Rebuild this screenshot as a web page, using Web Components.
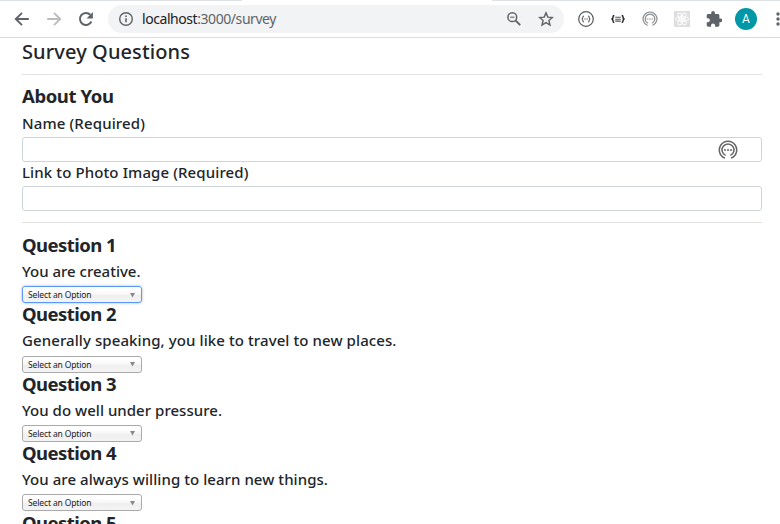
<!DOCTYPE html>
<html lang="en"><head><meta charset="utf-8"><title>Survey</title>
<style>
html,body{margin:0;height:524px;overflow:hidden;background:#fff}
body{font-family:"Noto Sans","Open Sans",sans-serif;color:#212529}
</style></head><body>
<survey-app></survey-app>
<script>
class Base extends HTMLElement{
  paint(html){(this.shadowRoot||this.attachShadow({mode:'open'})).innerHTML=html;}
}
/* A single line of text, tracked so that it spans the width in its "span" attribute. */
customElements.define('text-line',class extends Base{
  connectedCallback(){
    this.paint('<style>:host{display:block;white-space:nowrap}span{display:inline-block}</style><span><slot></slot></span>');
    const s=this.shadowRoot.querySelector('span'),n=this.textContent.length;
    s.style.letterSpacing=((+this.getAttribute('span')-s.getBoundingClientRect().width)/n)+'px';
  }
});
customElements.define('ring-icon',class extends Base{
  connectedCallback(){
    this.paint(`<style>:host{display:block}svg{display:block;width:100%;height:100%}</style>
<svg viewBox="0 0 20 20" fill="none" stroke="currentColor" stroke-width="1.5"><path d="M7 18.1A8.7 8.7 0 1 1 13 18.1"/><path d="M7.6 15.4A6 6 0 1 1 12.4 15.4"/><path d="M6 10h2m1 0h2m1 0h2" stroke-width="1.4"/></svg>`);
  }
});
customElements.define('browser-bar',class extends Base{
  connectedCallback(){
    this.paint(`<style>
:host{display:flex;flex:none;box-sizing:border-box;height:38px;border-bottom:1px solid #d9dbde;align-items:center;color:#5f6368;
background:linear-gradient(#dee1e6,#dee1e6) 0 0/242px 1px no-repeat,linear-gradient(#dee1e6,#dee1e6) 492px 0/288px 1px no-repeat,#fff;padding-left:14px;overflow:hidden}
svg{display:block;flex:none}
.nav{display:flex;gap:16px;margin-right:14px;margin-top:1px}
.box{display:flex;align-items:center;box-sizing:border-box;width:456px;height:28px;border-radius:14px;background:#f1f3f4;padding:0 10px;margin-top:1px;flex:none}
text-line{font:14px/20px "Noto Sans",sans-serif;margin:-1px 0 0 8px;flex:1;color:#5f6368}
b{font-weight:400;color:#202124}
.ext{display:flex;align-items:center;margin:1px 0 0 14px;gap:16px}
ring-icon{width:16px;height:16px;color:#8b8d90}
.av{width:22px;height:22px;border-radius:50%;background:#0097a7;color:#fff;font:12px/22px Roboto,sans-serif;text-align:center;margin-left:-3px;flex:none}
</style>
<div class="nav">
<svg width="16" height="16" viewBox="0 0 16 16" fill="none" stroke="#5f6368" stroke-width="1.9"><path d="M14.8 8H2.5M8 1.8 1.8 8 8 14.2"/></svg>
<svg width="16" height="16" viewBox="0 0 16 16" fill="none" stroke="#babcbe" stroke-width="1.9"><path d="M1.2 8h12.3M8 1.8 14.2 8 8 14.2"/></svg>
<svg width="16" height="16" viewBox="0 0 16 16"><path d="M13.4 10.5A6 6 0 1 1 12.3 3.8" fill="none" stroke="#5f6368" stroke-width="2"/><path d="M14.9 1v6.4H8.5z" fill="#5f6368"/></svg>
</div>
<div class="box">
<svg width="16" height="16" viewBox="0 0 16 16" fill="none" stroke="#5f6368" stroke-width="1.4"><circle cx="8" cy="8" r="6.3"/><path d="M8 7.2v4.1M8 4.4V6" stroke-width="1.6"/></svg>
<text-line span="134"><b>localhost</b>:3000/survey</text-line>
<svg width="16" height="16" viewBox="0 0 16 16" fill="none" stroke="#5f6368" stroke-width="1.5" style="margin-right:16px"><circle cx="6.3" cy="6.2" r="4.4"/><path d="m9.6 9.5 4.6 4.6" stroke-width="1.8"/><path d="M4.2 6.2h4.2" stroke-width="1.1"/></svg>
<svg width="16" height="16" viewBox="0 0 16 16" fill="none" stroke="#5f6368" stroke-width="1.4"><path d="m8 1.9 1.8 4.2 4.6.4-3.5 3 1.1 4.5-4-2.4L4 14l1.1-4.5-3.5-3 4.6-.4z"/></svg>
</div>
<div class="ext">
<svg width="16" height="16" viewBox="0 0 16 16" fill="none" stroke="#55585c"><circle cx="8" cy="8" r="7.3" stroke-width="1.2"/><path d="M6 5c-1.2 0-1.2.5-1.2 1.5S4.5 7.8 3.7 8c.8.2 1.1.5 1.1 1.5S4.8 11 6 11M10 5c1.2 0 1.2.5 1.2 1.5S11.5 7.8 12.3 8c-.8.2-1.1.5-1.1 1.5S11.2 11 10 11" stroke-width="1.1"/><path d="M6.3 8h.9m.4 0h.9m.4 0h.9" stroke-width="1"/></svg>
<svg width="16" height="16" viewBox="0 0 16 16" fill="none" stroke="#222"><path d="M4.3 4.5C3 4.5 3 5 3 6.2S2.5 7.8 1.5 8C2.5 8.2 3 8.6 3 9.8s0 1.7 1.3 1.7M11.7 4.5c1.3 0 1.3.5 1.3 1.7s.5 1.6 1.5 1.8c-1 .2-1.5.6-1.5 1.8s0 1.7-1.3 1.7" stroke-width="1.5"/><path d="M5.2 6.3h5.6M5.2 8.2h5.6M5.2 10.1h5.6" stroke-width="1.1" stroke="#555"/></svg>
<ring-icon></ring-icon>
<svg width="16" height="16" viewBox="0 0 16 16" fill="none" stroke="#fff"><path d="M0 0h16v16H0z" fill="#dedede" stroke="none"/><g stroke-width=".9"><ellipse cx="8" cy="8" rx="6.7" ry="2.5"/><ellipse cx="8" cy="8" rx="6.7" ry="2.5" transform="rotate(60 8 8)"/><ellipse cx="8" cy="8" rx="6.7" ry="2.5" transform="rotate(120 8 8)"/></g><circle cx="8" cy="8" r="1.3" fill="#fff"/></svg>
<svg width="16" height="16" viewBox="1 1 21.5 21.5" fill="#5f6368"><path d="M20.5 11H19V7c0-1.1-.9-2-2-2h-4V3.5a2.5 2.5 0 0 0-5 0V5H4c-1.1 0-2 .9-2 2v3.8h1.5a2.7 2.7 0 0 1 0 5.4H2V20c0 1.1.9 2 2 2h3.8v-1.5a2.7 2.7 0 0 1 5.4 0V22H17c1.1 0 2-.9 2-2v-4h1.5a2.5 2.5 0 0 0 0-5z"/></svg>
<div class="av">A</div>
<svg width="16" height="16" viewBox="0 0 16 16" fill="#5f6368" style="margin-left:-3px"><circle cx="8" cy="3" r="1.7"/><circle cx="8" cy="8" r="1.7"/><circle cx="8" cy="13" r="1.7"/></svg>
</div>`);
  }
});
customElements.define('text-field',class extends Base{
  connectedCallback(){
    this.paint(`<style>:host{display:flex;flex-direction:column}
text-line{font-size:15px;line-height:20px;height:24px;font-weight:500}
.in{box-sizing:border-box;height:25px;border:1px solid #ced4da;border-radius:3px;background:#fff;display:flex;align-items:center;justify-content:flex-end;padding-right:23px}
::slotted(ring-icon){width:20px;height:20px;color:#666}</style>
<text-line span="${this.getAttribute('span')}">${this.getAttribute('label')}</text-line><div class="in"><slot></slot></div>`);
  }
});
customElements.define('option-select',class extends Base{
  connectedCallback(){
    this.paint(`<style>:host{display:flex;box-sizing:border-box;width:120px;height:17px;border:1px solid #aaa;border-radius:3px;background:linear-gradient(#fff 20%,#f6f6f6 50%,#eee 52%,#f4f4f4);align-items:center;justify-content:space-between;padding:0 6px 0 5px;color:#222}
:host([active]){border-color:#5897fb;box-shadow:0 0 3px rgba(0,0,0,.3)}
text-line{font-size:8.5px;line-height:15px}
svg{display:block;margin-top:1px}</style><text-line span="63.5">Select an Option</text-line><svg width="5" height="5" viewBox="0 0 5 5"><path d="M0 0h5L2.5 4.5z" fill="#888"/></svg>`);
  }
});
customElements.define('survey-question',class extends Base{
  connectedCallback(){
    this.paint(`<style>:host{display:flex;flex-direction:column;height:69.4px;flex:none}
.h{font-size:18.5px;font-weight:700;line-height:24px;height:24px}
.p{font-size:15px;font-weight:500;line-height:24px;height:24px;margin:2px 0 3.2px}</style>
<text-line class="h" span="94">Question ${this.getAttribute('n')}</text-line>
${this.hasAttribute('text')?`<text-line class="p" span="${this.getAttribute('span')}">${this.getAttribute('text')}</text-line>
<option-select ${this.hasAttribute('active')?'active':''}></option-select>`:''}`);
  }
});
customElements.define('survey-app',class extends Base{
  connectedCallback(){
    this.paint(`<style>:host{display:flex;flex-direction:column;height:524px;overflow:hidden}
main{display:flex;flex-direction:column;padding:0 18px 0 22px;flex:1;min-height:0}
.t{font-size:20px;font-weight:500;line-height:28px;height:36px;flex:none}
.rule{height:1px;background:#e3e3e4;flex:none}
.a{font-size:18.5px;font-weight:700;line-height:24px;height:24px;margin:9px 0 5px;flex:none}
text-field{flex:none}
.r2{margin:11px 0 10px}
</style>
<browser-bar></browser-bar>
<main>
<text-line class="t" span="168">Survey Questions</text-line>
<div class="rule"></div>
<text-line class="a" span="91.5">About You</text-line>
<text-field label="Name (Required)" span="123"><ring-icon></ring-icon></text-field>
<text-field label="Link to Photo Image (Required)" span="226.5"></text-field>
<div class="rule r2"></div>
<survey-question n="1" text="You are creative." span="118.5" active></survey-question>
<survey-question n="2" text="Generally speaking, you like to travel to new places." span="374.5"></survey-question>
<survey-question n="3" text="You do well under pressure." span="200"></survey-question>
<survey-question n="4" text="You are always willing to learn new things." span="306"></survey-question>
<survey-question n="5"></survey-question>
</main>`);
  }
});
</script></body></html>
